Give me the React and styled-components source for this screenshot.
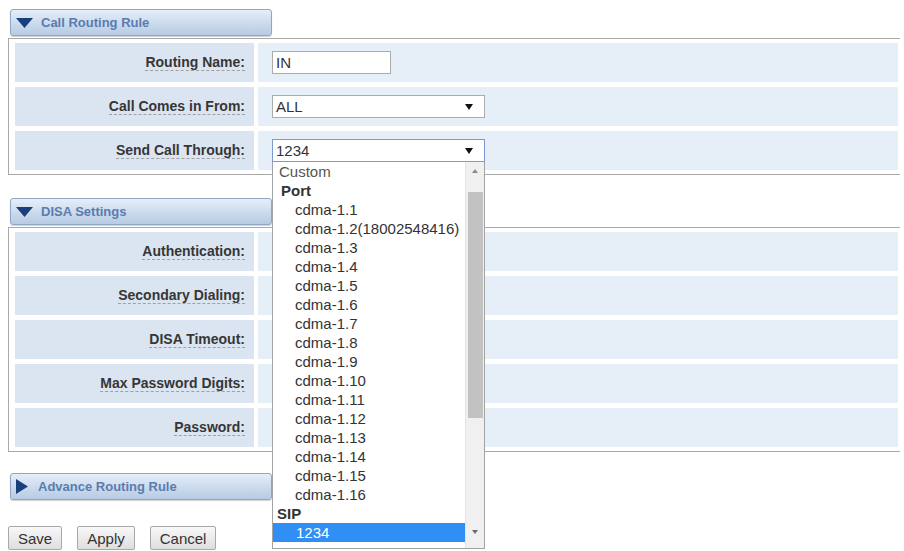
import styled, { createGlobalStyle } from 'styled-components';

const GlobalStyle = createGlobalStyle`
  html, body {
    margin: 0;
    padding: 0;
    background: #ffffff;
    font-family: "Liberation Sans", Arial, sans-serif;
    color: #333333;
  }
`;

const Page = styled.div`
  width: 904px;
  height: 551px;
  padding: 9px 4px 0 8px;
  box-sizing: border-box;
  overflow: hidden;
`;

const SectionHeader = styled.div`
  width: 262px;
  height: 27px;
  margin-left: 2px;
  margin-top: ${p => p.$top || 0}px;
  box-sizing: border-box;
  display: flex;
  align-items: center;
  gap: 8px;
  padding-left: 5px;
  border: 1px solid #8ea7c9;
  border-radius: 3px;
  background: linear-gradient(#e6eef8, #cddcee 50%, #b7cbe4);
  box-shadow: 0 1px 1px rgba(0, 0, 0, 0.18);
  font-size: 13px;
  font-weight: bold;
  color: #5a7cae;
`;

const Arrow = styled.svg`
  flex: none;
  fill: #1b3f7d;
  margin-right: ${p => p.$after || 0}px;
`;

const Table = styled.div`
  width: 892px;
  box-sizing: border-box;
  margin-top: 2px;
  border-top: 1px solid #a9a9a9;
  border-left: 1px solid #a9a9a9;
  border-bottom: 1px solid #a9a9a9;
  padding: 4px 2px 4px 6px;
  display: flex;
  flex-direction: column;
  gap: 5px;
`;

const Row = styled.div`
  display: grid;
  grid-template-columns: 239px 1fr;
  gap: 4px;
  height: 39px;
`;

const LabelCell = styled.div`
  background: #dbe5f1;
  display: flex;
  align-items: center;
  justify-content: flex-end;
  padding-right: 9px;
`;

const Label = styled.span`
  font-size: 14px;
  font-weight: bold;
  color: #363636;
  border-bottom: 1px dashed #a0a0a0;
  line-height: 16px;
`;

const ValueCell = styled.div`
  background: #e6eef8;
  display: flex;
  align-items: center;
  padding-left: 14px;
`;

const TextInput = styled.div`
  width: 119px;
  height: 23px;
  box-sizing: border-box;
  border: 1px solid #ababab;
  background: #ffffff;
  font-size: 15px;
  line-height: 21px;
  padding-left: 3px;
`;

const SelectWrap = styled.div`
  position: relative;
`;

const SelectBox = styled.div`
  width: 213px;
  height: 23px;
  box-sizing: border-box;
  border: 1px solid ${p => (p.$focus ? '#7c9ad0' : '#ababab')};
  background: #ffffff;
  font-size: 15px;
  line-height: 21px;
  padding-left: 3px;
  display: flex;
  justify-content: space-between;
  align-items: center;
`;

const Caret = styled.span`
  width: 0;
  height: 0;
  margin-right: 11px;
  border-left: 4px solid transparent;
  border-right: 4px solid transparent;
  border-top: 6px solid #111111;
`;

const DropList = styled.div`
  position: absolute;
  top: 100%;
  left: 0;
  z-index: 5;
  width: 213px;
  height: 387px;
  box-sizing: border-box;
  border: 1px solid #a3a3a3;
  border-top: none;
  background: #ffffff;
  display: flex;
`;

const Options = styled.div`
  flex: 1;
  display: flex;
  flex-direction: column;
`;

const Option = styled.div`
  height: 19px;
  line-height: 19px;
  font-size: 15px;
  white-space: nowrap;
  padding-left: ${p => p.$indent}px;
  font-weight: ${p => (p.$group ? 'bold' : 'normal')};
  color: ${p => (p.$selected ? '#ffffff' : p.$muted ? '#555555' : '#333333')};
  background: ${p => (p.$selected ? '#2f8ff5' : 'transparent')};
`;

const ScrollBar = styled.div`
  width: 18px;
  background: #f0f0f0;
  border-left: 1px solid #e4e4e4;
  display: flex;
  flex-direction: column;
  align-items: center;
`;

const ScrollArrow = styled.div`
  height: 17px;
  display: flex;
  align-items: center;
  justify-content: center;
  width: 100%;
`;

const ArrowUp = styled.span`
  border-left: 3px solid transparent;
  border-right: 3px solid transparent;
  border-bottom: 4px solid #8a8a8a;
`;

const ArrowDown = styled.span`
  border-left: 3px solid transparent;
  border-right: 3px solid transparent;
  border-top: 4px solid #6a6a6a;
`;

const Thumb = styled.div`
  width: 15px;
  height: 226px;
  margin-top: 13px;
  background: #c2c2c2;
`;

const Spacer = styled.div`
  flex: 1;
`;

const BottomPad = styled.div`
  height: 8px;
`;

const Buttons = styled.div`
  display: flex;
  gap: 15px;
  margin-top: 26px;
`;

const Button = styled.button`
  height: 24px;
  padding: 0 9px;
  border: 1px solid #a8a8a8;
  border-radius: 2px;
  background: linear-gradient(#f8f8f8, #dedede);
  font-family: "Liberation Sans", Arial, sans-serif;
  font-size: 15px;
  color: #333333;
`;

const DownArrow = () => (
  <Arrow width="17" height="10" viewBox="0 0 17 10">
    <polygon points="0,0 17,0 8.5,10" />
  </Arrow>
);

const RightArrow = () => (
  <Arrow width="12" height="15" viewBox="0 0 12 15" $after={2}>
    <polygon points="0,0 12,7.5 0,15" />
  </Arrow>
);

const ports = Array.from({ length: 16 }, (_, i) =>
  i === 1 ? 'cdma-1.2(18002548416)' : `cdma-1.${i + 1}`
);

const disaLabels = [
  'Authentication:',
  'Secondary Dialing:',
  'DISA Timeout:',
  'Max Password Digits:',
  'Password:',
];

const App = () => (
  <>
    <GlobalStyle />
    <Page>
      <SectionHeader>
        <DownArrow />
        Call Routing Rule
      </SectionHeader>
      <Table>
        <Row>
          <LabelCell><Label>Routing Name:</Label></LabelCell>
          <ValueCell><TextInput>IN</TextInput></ValueCell>
        </Row>
        <Row>
          <LabelCell><Label>Call Comes in From:</Label></LabelCell>
          <ValueCell>
            <SelectBox>ALL<Caret /></SelectBox>
          </ValueCell>
        </Row>
        <Row>
          <LabelCell><Label>Send Call Through:</Label></LabelCell>
          <ValueCell>
            <SelectWrap>
              <SelectBox $focus>1234<Caret /></SelectBox>
              <DropList>
                <Options>
                  <Option $indent={6} $muted>Custom</Option>
                  <Option $indent={8} $group>Port</Option>
                  {ports.map(p => (
                    <Option key={p} $indent={22}>{p}</Option>
                  ))}
                  <Option $indent={4} $group>SIP</Option>
                  <Option $indent={23} $selected>1234</Option>
                </Options>
                <ScrollBar>
                  <ScrollArrow><ArrowUp /></ScrollArrow>
                  <Thumb />
                  <Spacer />
                  <ScrollArrow><ArrowDown /></ScrollArrow>
                  <BottomPad />
                </ScrollBar>
              </DropList>
            </SelectWrap>
          </ValueCell>
        </Row>
      </Table>

      <SectionHeader $top={23}>
        <DownArrow />
        DISA Settings
      </SectionHeader>
      <Table>
        {disaLabels.map(l => (
          <Row key={l}>
            <LabelCell><Label>{l}</Label></LabelCell>
            <ValueCell />
          </Row>
        ))}
      </Table>

      <SectionHeader $top={21}>
        <RightArrow />
        Advance Routing Rule
      </SectionHeader>

      <Buttons>
        <Button>Save</Button>
        <Button>Apply</Button>
        <Button>Cancel</Button>
      </Buttons>
    </Page>
  </>
);

export default App;
